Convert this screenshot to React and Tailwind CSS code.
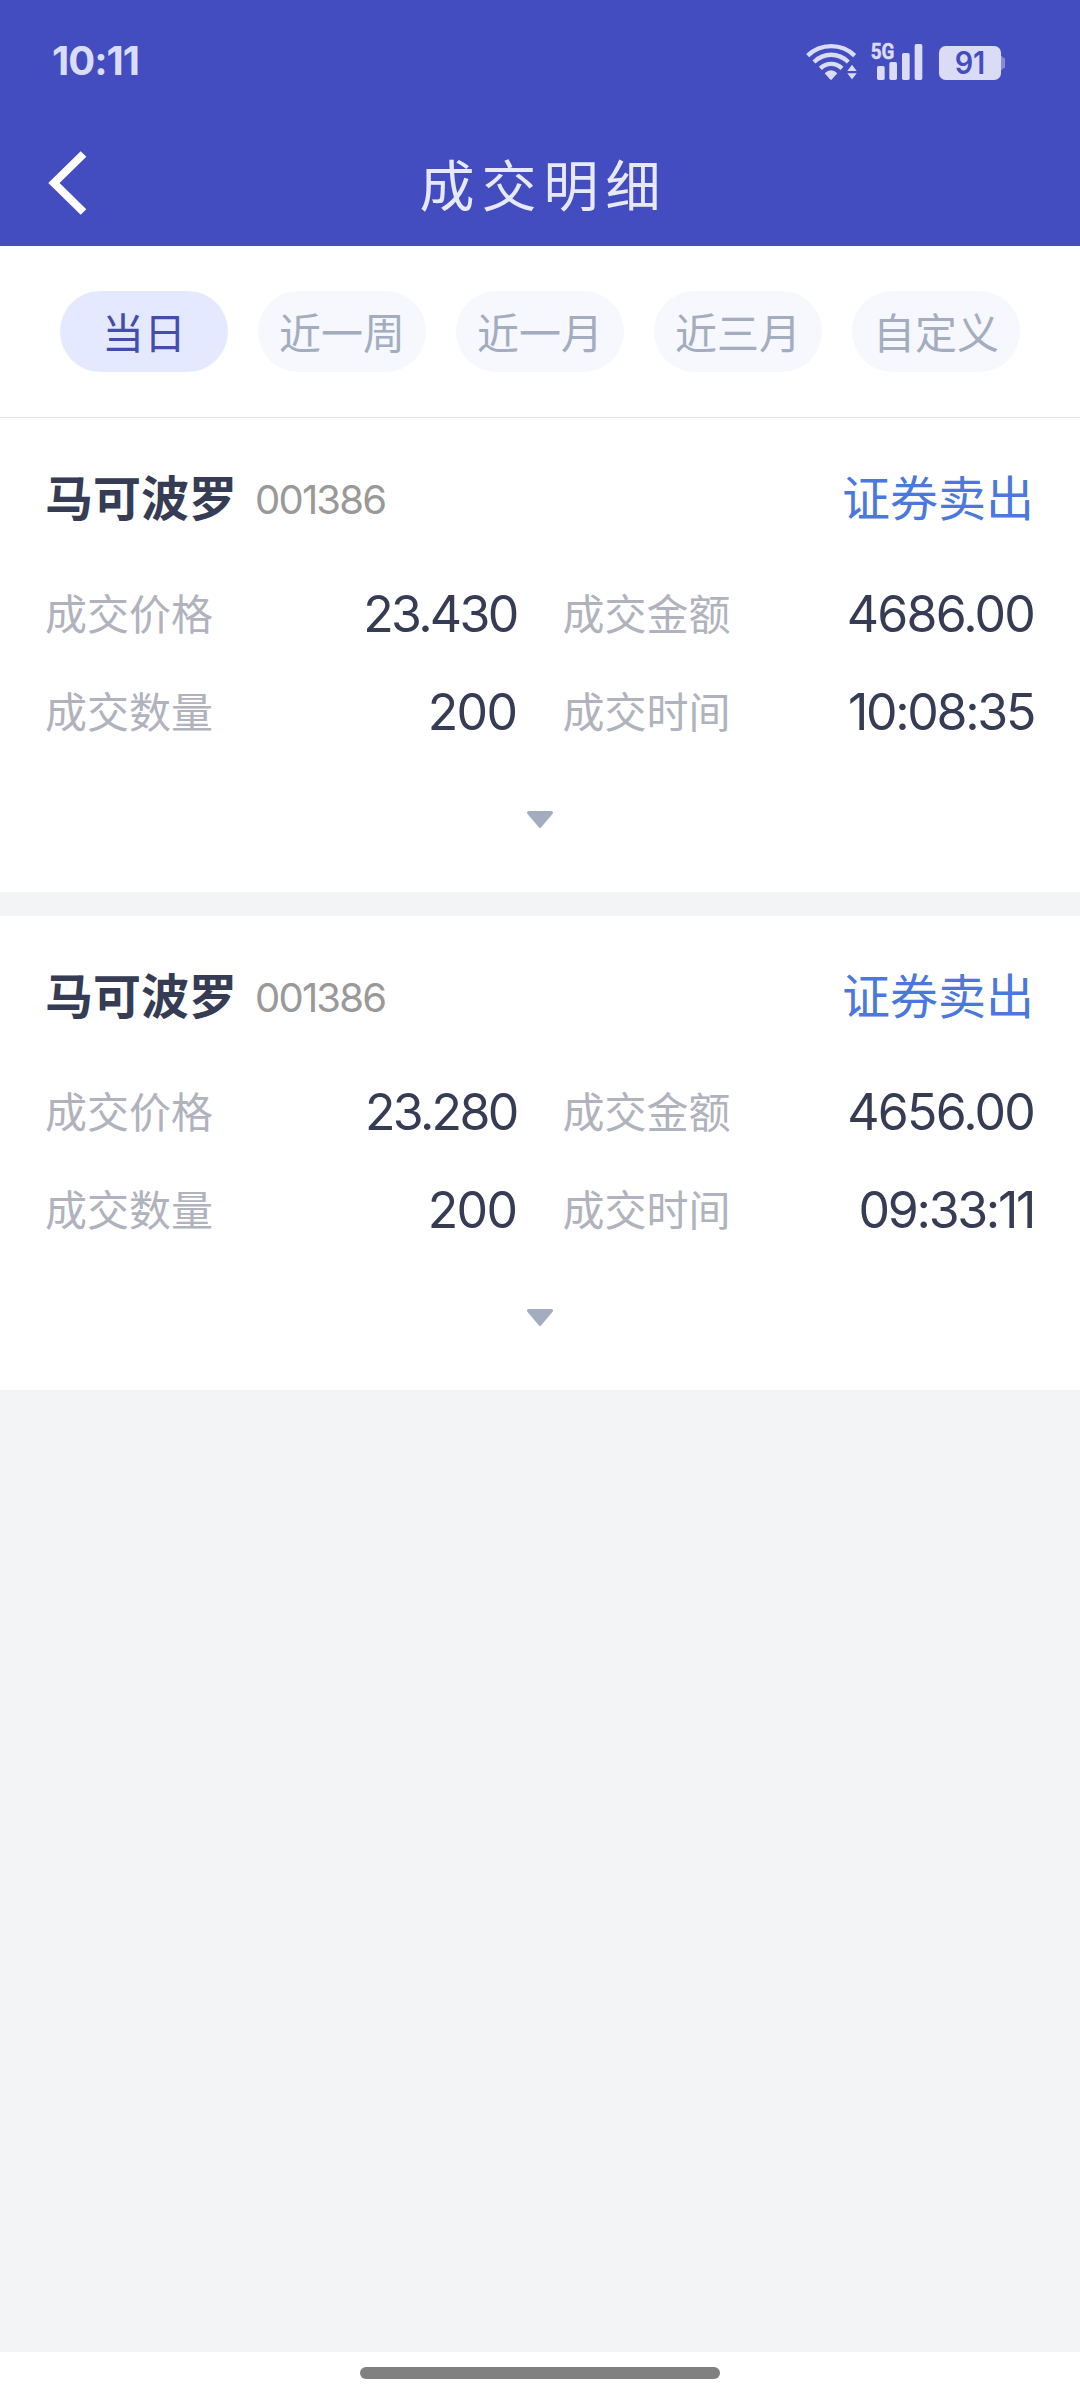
import React, { useState } from "react";

const tabs = ["当日", "近一周", "近一月", "近三月", "自定义"];

const trades = [
  {
    id: 1,
    name: "马可波罗",
    code: "001386",
    side: "证券卖出",
    price: "23.430",
    amount: "4686.00",
    count: "200",
    time: "10:08:35",
  },
  {
    id: 2,
    name: "马可波罗",
    code: "001386",
    side: "证券卖出",
    price: "23.280",
    amount: "4656.00",
    count: "200",
    time: "09:33:11",
  },
];

const StatusIcons = () => (
  <svg width="210" height="50" viewBox="75 60 630 150" fill="#dadcf5">
    {/* Wifi */}
    <g fill="none" stroke="#dadcf5" strokeWidth="13">
      <path d="M83 107 C122 69 185 69 224 107" />
      <path d="M102 126 C132 97 175 97 205 126" />
      <path d="M121 145 C140 127 167 127 186 145" />
    </g>
    <path d="M134 160 Q153 142 172 160 L156 178 Q153 181 150 178 Z" />
    <path
      d="M216 131 L234 155 H198 Z M198 158 H234 L216 181 Z"
      stroke="#444dbf"
      strokeWidth="4"
    />
    {/* Signal */}
    <text
      x="272"
      y="116"
      fontSize="66"
      fontWeight="700"
      fontFamily="Roboto"
      textLength="71"
      lengthAdjust="spacingAndGlyphs"
      stroke="#dadcf5"
      strokeWidth="1.5"
    >
      5G
    </text>
    <rect x="291" y="138" width="23" height="42" rx="5" />
    <rect x="328" y="126" width="23" height="54" rx="5" />
    <rect x="366" y="99" width="23" height="81" rx="5" />
    <rect x="404" y="72" width="23" height="108" rx="5" />
    {/* Battery */}
    <path d="M655 108 H666 Q667 114 675 115 V143 Q667 144 666 150 H655 Z" fill="#868bd8" />
    <rect x="477" y="78" width="186" height="102" rx="20" />
    <text
      x="570"
      y="163"
      fontSize="93"
      fontWeight="600"
      fontFamily="Inter"
      textAnchor="middle"
      textLength="92"
      lengthAdjust="spacingAndGlyphs"
      fill="#444dbf"
    >
      91
    </text>
  </svg>
);

const Field = ({ label, value, tracking = "tracking-[-1.6px]" }) => (
  <div className="flex items-center justify-between h-[98px]">
    <span className="pb-[3px] text-[42px] leading-none text-[#b0b2bd]">
      {label}
    </span>
    <span
      className={`pt-[1px] pr-[1px] font-[Inter] text-[50px] leading-none text-[#373c55] ${tracking}`}
    >
      {value}
    </span>
  </div>
);

const TradeCard = ({ trade }) => (
  <div className="bg-white h-[474px] px-[45px] pt-[44px]">
    <div className="flex items-center justify-between h-[70px]">
      <div className="flex items-center">
        <span className="pb-1 text-[48px] leading-none font-bold text-[#373c55]">
          {trade.name}
        </span>
        <span className="ml-[18px] mt-1.5 font-[Inter] text-[40px] leading-none tracking-[-1.8px] text-[#999999]">
          {trade.code}
        </span>
      </div>
      <span className="pb-1 pr-[1px] text-[48px] leading-none text-[#4a78dc]">
        {trade.side}
      </span>
    </div>
    <div className="grid grid-cols-2 gap-x-[45px] mt-[32px]">
      <Field label="成交价格" value={trade.price} tracking="tracking-[-2.7px]" />
      <Field label="成交金额" value={trade.amount} tracking="tracking-[-1.8px]" />
      <Field label="成交数量" value={trade.count} />
      <Field label="成交时间" value={trade.time} tracking="tracking-[-2.3px]" />
    </div>
    <button className="flex justify-center w-full mt-[51px]">
      <svg width="28" height="18" viewBox="0 0 28 18" fill="#a3adbf">
        <path d="M2.5 0 H25.5 Q28 0.5 26.5 3 L15 16.5 Q14 17.6 13 16.5 L1.500 3 Q0 0.500 2.500 0 Z" />
      </svg>
    </button>
  </div>
);

const App = () => {
  const [active, setActive] = useState("当日");

  return (
    <div className="flex flex-col w-[1080px] h-[2400px] overflow-hidden bg-[#f3f4f6] font-['Noto_Sans_CJK_SC',sans-serif]">
      {/* Header */}
      <header className="h-[246px] shrink-0 bg-[#444dbf]">
        <div className="flex items-start justify-between h-[123px] pl-[52px] pr-[65px] pt-[40px]">
          <span className="font-[Inter] text-[40px] leading-[42px] font-bold tracking-[-1px] text-[#dadcfb]">
            10:11
          </span>
          <StatusIcons />
        </div>
        <div className="grid grid-cols-[1fr_auto_1fr] items-center h-[119px] px-[48px]">
          <svg width="40" height="64" viewBox="0 0 40 64">
            <path
              d="M35.500 3 L6 32 L35.500 61"
              fill="none"
              stroke="#ffffff"
              strokeWidth="8"
            />
          </svg>
          <h1 className="pl-[7px] text-[55px] leading-none tracking-[7px] text-[#e8e9f8]">
            成交明细
          </h1>
          <span />
        </div>
      </header>

      {/* Date range tabs */}
      <div className="flex items-start gap-[30px] h-[172px] shrink-0 px-[60px] pt-[45px] bg-white border-b border-[#e5e5e5]">
        {tabs.map((tab) => (
          <button
            key={tab}
            onClick={() => setActive(tab)}
            className={`flex items-center justify-center w-[168px] h-[81px] pb-0.5 rounded-full text-[42px] leading-none ${
              active === tab
                ? "bg-[#e4e9ff] text-[#444dac]"
                : "bg-[#f6f8fd] text-[#a3adbf]"
            }`}
          >
            {tab}
          </button>
        ))}
      </div>

      {/* Trades */}
      <div className="flex flex-col gap-[24px] flex-1">
        {trades.map((trade) => (
          <TradeCard key={trade.id} trade={trade} />
        ))}
      </div>

      {/* Gesture bar */}
      <div className="flex justify-center h-[48px] shrink-0 pt-[15px] bg-white">
        <div className="w-[360px] h-[12px] rounded-full bg-[#808080]" />
      </div>
    </div>
  );
};

export default App;
